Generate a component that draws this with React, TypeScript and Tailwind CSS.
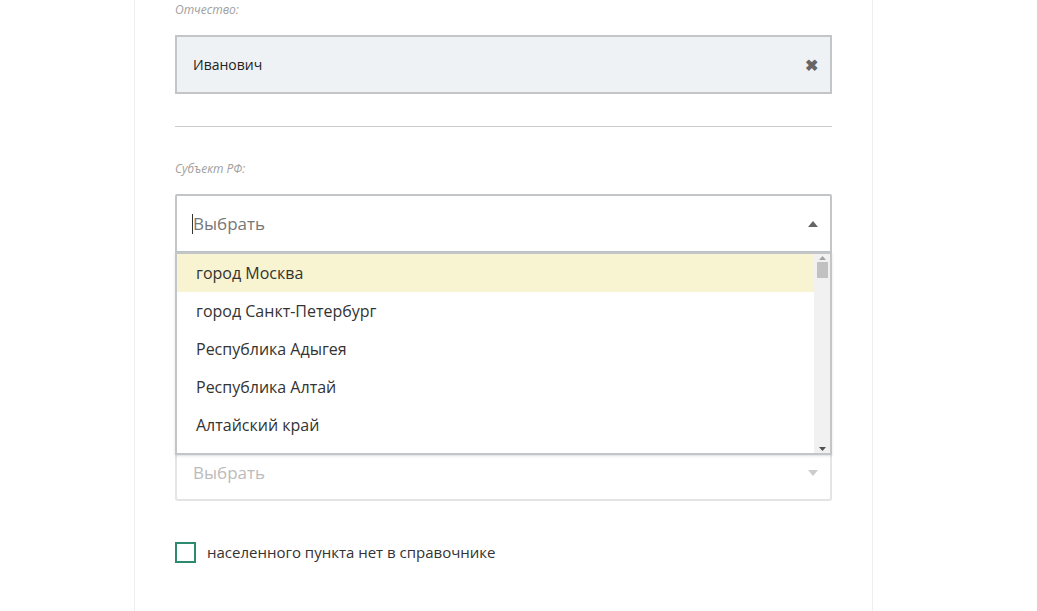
const items = ["город Москва", "город Санкт-Петербург", "Республика Адыгея", "Республика Алтай", "Алтайский край"];

export default function App() {
  return (
    <div className="min-h-[611px] bg-white flex" style={{ fontFamily: '"Open Sans", "Liberation Sans", sans-serif' }}>
      <div className="ml-[134px] w-[739px] border-x border-[#eeeeee] min-h-[611px] px-[40px]">
        <div className="text-[12px] italic text-[#a0a0a0] h-[35px] pt-[1px] leading-[18px]">Отчество:</div>
        <div className="h-[59px] bg-[#eef2f5] border-2 border-[#c3c6c9] flex items-center justify-between pl-[16px] pr-[12px]">
          <span className="text-[14px] text-[#222]">Иванович</span>
          <span className="text-[#666] text-[16px] font-bold">✖</span>
        </div>
        <div className="h-px bg-[#cccccc] mt-[32px] w-[657px]" />
        <div className="text-[12px] italic text-[#a0a0a0] mt-[33px] h-[34px] leading-[18px]">Субъект РФ:</div>
        <div className="relative">
          <div className="h-[59px] border-2 border-[#c3c6c9] flex items-center justify-between pl-[15px] pr-[12px] rounded-t-[2px]">
            <span className="text-[17px] text-[#777] border-l border-[#333] leading-[20px]">Выбрать</span>
            <svg width="10" height="6" viewBox="0 0 10 6"><path d="M0 6 L5 0 L10 6Z" fill="#666" /></svg>
          </div>
          <div className="absolute left-0 right-0 top-[58px] h-[203px] bg-white border-2 border-[#c3c6c9] flex shadow z-10">
            <div className="flex-1">
              {items.map((t, i) => (
                <div key={t} className={`h-[38px] flex items-center pl-[19px] text-[16px] text-[#333] ${i === 0 ? "bg-[#f8f3d0]" : ""}`}>{t}</div>
              ))}
            </div>
            <div className="w-[16px] bg-[#f1f1f1] flex flex-col items-center justify-between py-[2px]">
              <svg width="7" height="4" viewBox="0 0 7 4"><path d="M0 4 L3.5 0 L7 4Z" fill="#a3a3a3" /></svg>
              <div className="w-[11px] h-[16px] bg-[#c1c1c1] mt-[2px]" />
              <div className="flex-1" />
              <svg width="7" height="4" viewBox="0 0 7 4"><path d="M0 0 L3.5 4 L7 0Z" fill="#505050" /></svg>
            </div>
          </div>
          <div className="h-[57px] mt-[191px] border-2 border-[#e4e4e4] rounded-b-[3px] flex items-center justify-between pl-[16px] pr-[12px]">
            <span className="text-[17px] text-[#bbb]">Выбрать</span>
            <svg width="10" height="6" viewBox="0 0 10 6"><path d="M0 0 L5 6 L10 0Z" fill="#ccc" /></svg>
          </div>
        </div>
        <label className="flex items-center gap-[11px] mt-[40px]">
          <span className="w-[21px] h-[21px] border-2 border-[#2e8a6e]" />
          <span className="text-[15px] text-[#333]">населенного пункта нет в справочнике</span>
        </label>
      </div>
    </div>
  );
}
